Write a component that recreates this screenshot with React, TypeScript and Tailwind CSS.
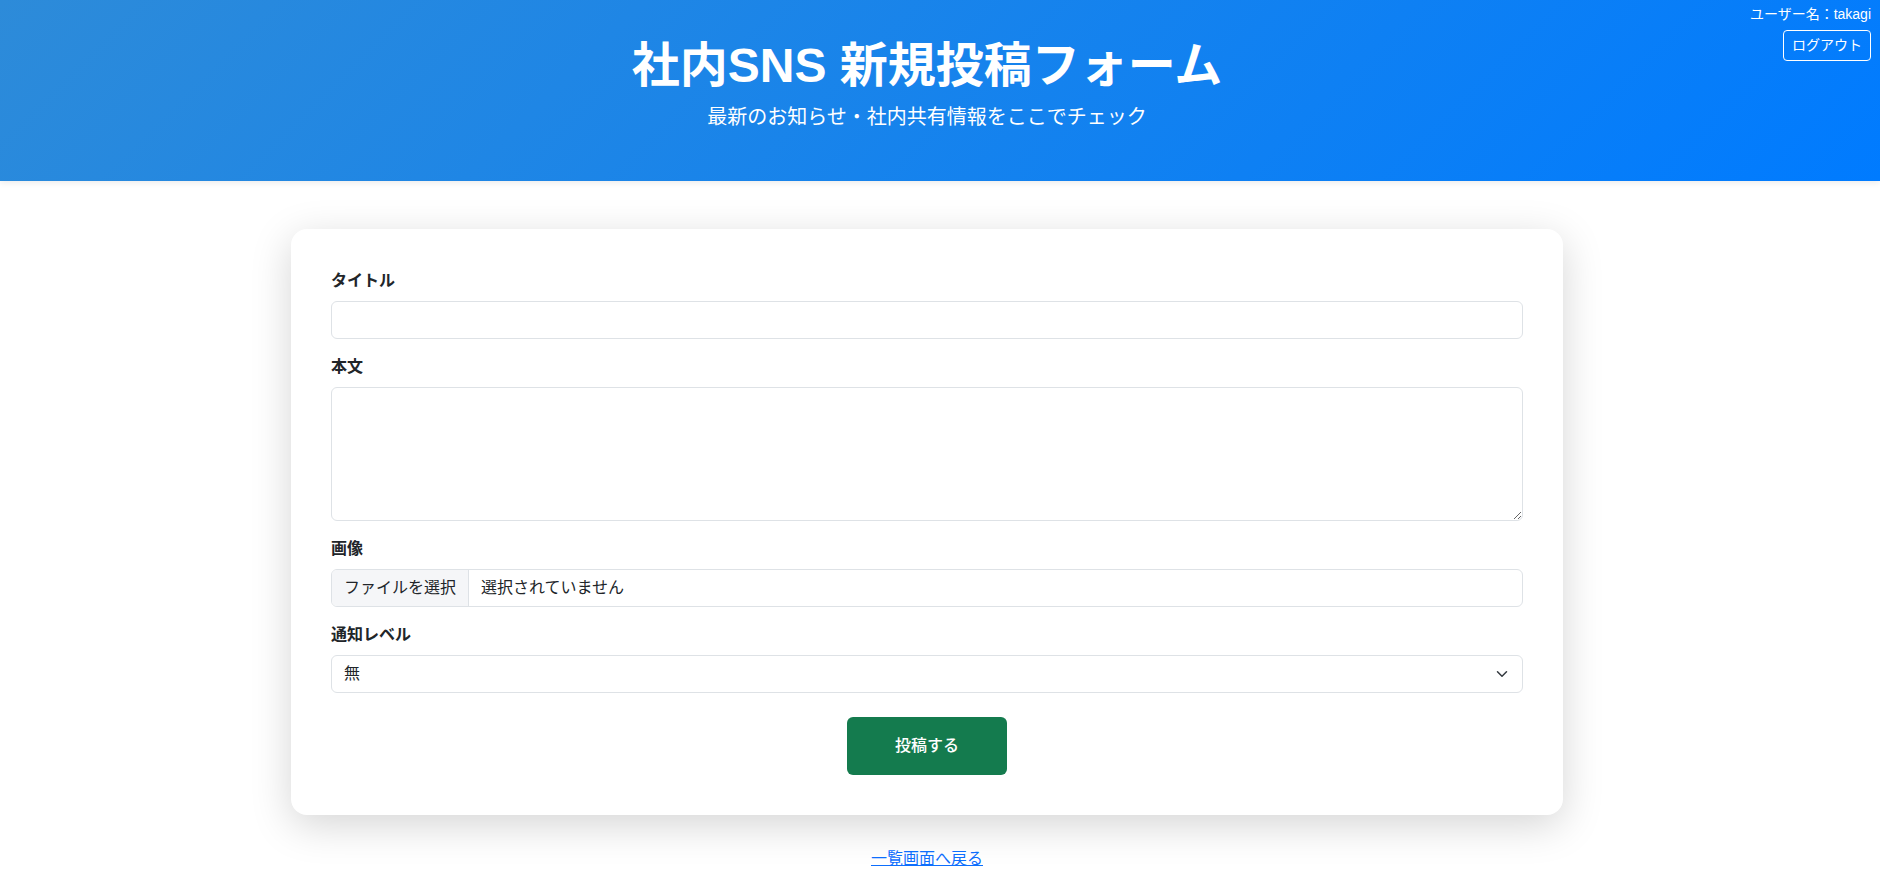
import React from "react";

const font = { fontFamily: '"Liberation Sans", "Noto Sans CJK JP", sans-serif' };

export default function App() {
  return (
    <div className="min-h-screen bg-white text-[#212529]" style={font}>
      <header className="relative h-[181px] bg-[linear-gradient(135deg,#2d8bd9_0%,#007bff_100%)] shadow-[0_2px_6px_rgba(0,0,0,0.08)] text-white">
        <div className="flex flex-col items-center pr-[26px] pt-[37px]">
          <h1 className="text-[48px] leading-[58px] font-bold">社内SNS 新規投稿フォーム</h1>
          <p className="mt-[7px] text-[20px] leading-[30px]">最新のお知らせ・社内共有情報をここでチェック</p>
        </div>
        <div className="absolute right-[9px] top-[4px] flex flex-col items-end">
          <span className="text-[14px] leading-[21px]">ユーザー名：takagi</span>
          <button className="mt-[5px] rounded-[4px] border border-white px-[8px] py-[4px] text-[14px] leading-[21px] text-white">
            ログアウト
          </button>
        </div>
      </header>

      <main className="flex flex-col items-center pr-[26px]">
        <div className="mt-12 w-[1272px] rounded-2xl bg-white p-10 shadow-[0_10px_40px_rgba(0,0,0,0.17)]">
          <div className="mb-4">
            <label className="mb-2 block text-[16px] leading-6 font-bold">タイトル</label>
            <input
              type="text"
              className="block h-[38px] w-full rounded-[6px] border border-[#dee2e6] bg-white px-3 text-[16px] outline-none"
            />
          </div>
          <div className="mb-4">
            <label className="mb-2 block text-[16px] leading-6 font-bold">本文</label>
            <textarea className="block h-[134px] w-full resize-y rounded-[6px] border border-[#dee2e6] bg-white px-3 py-1.5 text-[16px] outline-none" />
          </div>
          <div className="mb-4">
            <label className="mb-2 block text-[16px] leading-6 font-bold">画像</label>
            <div className="flex h-[38px] w-full overflow-hidden rounded-[6px] border border-[#dee2e6] bg-white text-[16px] leading-6">
              <div className="flex items-center border-r border-[#dee2e6] bg-[#f5f6f8] px-3">ファイルを選択</div>
              <div className="flex items-center pl-3">選択されていません</div>
            </div>
          </div>
          <div className="mb-4">
            <label className="mb-2 block text-[16px] leading-6 font-bold">通知レベル</label>
            <div className="flex h-[38px] w-full items-center justify-between rounded-[6px] border border-[#dee2e6] bg-white pl-3 pr-3 text-[16px]">
              <span>無</span>
              <svg width="16" height="12" viewBox="0 0 16 16" fill="none">
                <path d="m2 5 6 6 6-6" stroke="#343a40" strokeWidth="2" strokeLinecap="round" strokeLinejoin="round" />
              </svg>
            </div>
          </div>
          <div className="flex justify-center pt-2">
            <button className="rounded-[6px] bg-[#147b4e] px-12 py-[17px] text-[16px] leading-6 font-medium text-white">
              投稿する
            </button>
          </div>
        </div>
        <a href="#" className="mt-8 text-[16px] leading-6 text-[#0d6efd] underline">
          一覧画面へ戻る
        </a>
      </main>
    </div>
  );
}
